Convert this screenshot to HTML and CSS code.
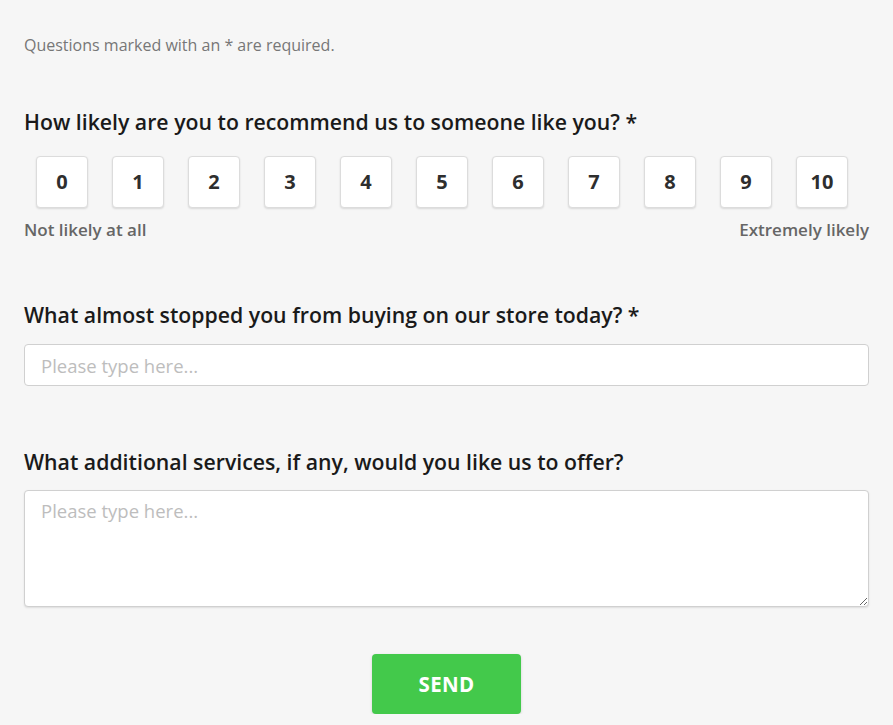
FILE: index.html
```html
<!DOCTYPE html>
<html>
<head>
<meta charset="utf-8">
<link rel="stylesheet" href="styles.css">
</head>
<body>
<form class="survey">
  <p class="note">Questions marked with an * are required.</p>

  <div class="question q-nps">
    <h2 class="q-title">How likely are you to recommend us to someone like you? *</h2>
    <div class="scale">
      <button type="button" class="score">0</button>
      <button type="button" class="score">1</button>
      <button type="button" class="score">2</button>
      <button type="button" class="score">3</button>
      <button type="button" class="score">4</button>
      <button type="button" class="score">5</button>
      <button type="button" class="score">6</button>
      <button type="button" class="score">7</button>
      <button type="button" class="score">8</button>
      <button type="button" class="score">9</button>
      <button type="button" class="score">10</button>
    </div>
    <div class="scale-labels">
      <span>Not likely at all</span>
      <span>Extremely likely</span>
    </div>
  </div>

  <div class="question q-text">
    <h2 class="q-title">What almost stopped you from buying on our store today? *</h2>
    <input class="field" type="text" placeholder="Please type here...">
  </div>

  <div class="question q-area">
    <h2 class="q-title">What additional services, if any, would you like us to offer?</h2>
    <textarea class="field area" placeholder="Please type here..."></textarea>
  </div>

  <div class="actions">
    <button type="button" class="send">SEND</button>
  </div>
</form>
</body>
</html>
```
FILE: styles.css
```css
* { box-sizing: border-box; }
html, body {
  margin: 0;
  padding: 0;
  background: #f6f6f6;
  font-family: "Open Sans", "Liberation Sans", sans-serif;
  color: #1a1a1a;
}
.survey {
  padding: 34px 24px 0 24px;
  width: 893px;
}
.note {
  margin: 0;
  font-size: 16px;
  line-height: 22px;
  color: #777;
}
.question { margin: 0; }
.q-title {
  margin: 0;
  font-size: 21.25px;
  font-weight: 600;
  line-height: 28px;
  color: #1a1a1a;
}
.q-nps { margin-top: 52px; }
.q-nps .q-title { margin-bottom: 20px; }
.scale {
  display: flex;
  gap: 24px;
  padding-left: 12px;
}
.score {
  width: 52px;
  height: 52px;
  background: #fff;
  border: 1px solid #dcdcdc;
  border-radius: 4px;
  box-shadow: 0 1px 2px rgba(0,0,0,0.12);
  font-family: inherit;
  font-size: 20px;
  font-weight: 700;
  color: #2e2e2e;
  padding: 0 0 2px 0;
}
.scale-labels {
  display: flex;
  justify-content: space-between;
  margin-top: 10px;
  font-size: 17px;
  font-weight: 600;
  color: #666;
  line-height: 24px;
}
.q-text { margin-top: 59px; }
.q-text .q-title { margin-bottom: 15px; }
.q-area .q-title { margin-bottom: 14px; }
.field {
  display: block;
  width: 100%;
  height: 42px;
  background: #fff;
  border: 1px solid #d0d0d0;
  border-radius: 4px;
  padding: 0 16px;
  font-family: inherit;
  font-size: 18.5px;
  color: #333;
  outline: none;
}
.field::placeholder { color: #bdbdbd; }
.q-area { margin-top: 62px; }
.area {
  height: 117px;
  padding: 8px 16px;
  resize: vertical;
  line-height: 24px;
  box-shadow: 0 1px 2px rgba(0,0,0,0.1);
}
.actions {
  display: flex;
  justify-content: center;
  margin-top: 47px;
}
.send {
  width: 149px;
  height: 60px;
  background: #43c94b;
  border: none;
  border-radius: 4px;
  color: #fff;
  font-family: inherit;
  font-size: 20.5px;
  font-weight: 700;
  letter-spacing: 0.3px;
  box-shadow: 0 1px 3px rgba(0,0,0,0.15);
}
```
